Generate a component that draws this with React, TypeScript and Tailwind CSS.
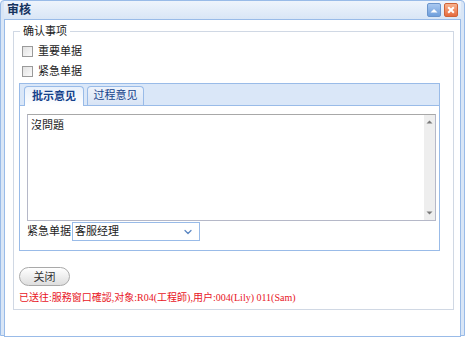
import { ChevronDown } from 'lucide-react';

const font = { fontFamily: '"Liberation Sans", "Noto Sans CJK SC", sans-serif' };

export default function App() {
  return (
    <div className="w-[465px] h-[337px] bg-white" style={font}>
      <div className="w-[465px] h-[336px] flex flex-col border border-[#99bbe8] bg-[#d9e6f6] rounded-t-[4px] px-[3px] pb-[5px]">
        {/* 标题栏 */}
        <div className="h-[21px] flex items-center justify-between pl-[3px] pr-[3px] bg-gradient-to-b from-[#eef4fc] to-[#d9e6f6]">
          <span className="text-[12px] font-bold text-[#15335e]">审核</span>
          <div className="flex gap-[3px]">
            <div className="w-[14px] h-[14px] rounded-[2px] bg-gradient-to-b from-[#a9c8f0] to-[#6f9fdc] border border-[#6b95cc] flex items-center justify-center">
              <svg width="8" height="5" viewBox="0 0 8 5"><path d="M0.5 4.5 L4 1 L7.5 4.5 Z" fill="#fff" /></svg>
            </div>
            <div className="w-[14px] h-[14px] rounded-[2px] bg-gradient-to-b from-[#f7b28e] to-[#e56a3d] border border-[#cf6236] flex items-center justify-center">
              <svg width="8" height="8" viewBox="0 0 8 8"><path d="M1.2 1.2 L6.8 6.8 M6.8 1.2 L1.2 6.8" stroke="#fff" strokeWidth="2" /></svg>
            </div>
          </div>
        </div>

        {/* 内容 */}
        <div className="flex-1 bg-white border border-[#99bbe8] pl-[8px] pr-[6px] pt-[3px] pb-[26px] flex flex-col">
          <fieldset className="flex-1 border border-[#d0d8e4] px-[5px] pb-[4px] flex flex-col">
            <legend className="text-[11px] text-[#222] px-[3px] ml-[1px]">确认事项</legend>

            <label className="flex items-center gap-[5px] mt-[4px] ml-[3px] h-[16px] text-[11px] text-[#222]">
              <span className="w-[11px] h-[11px] border border-[#9a9a9a] bg-gradient-to-br from-[#e2e2e2] to-[#fbfbfb]" />
              重要单据
            </label>
            <label className="flex items-center gap-[5px] mt-[4px] ml-[3px] h-[16px] text-[11px] text-[#222]">
              <span className="w-[11px] h-[11px] border border-[#9a9a9a] bg-gradient-to-br from-[#e2e2e2] to-[#fbfbfb]" />
              紧急单据
            </label>

            {/* 选项卡 */}
            <div className="mt-[3px] mr-[8px] h-[168px] border border-[#99bbe8] flex flex-col">
              <div className="h-[22px] bg-[#dae7f8] border-b border-[#99bbe8] flex items-end gap-[3px] pl-[4px]">
                <div className="h-[20px] w-[60px] -mb-px bg-gradient-to-b from-[#e8f0fb] to-white border border-b-0 border-[#99bbe8] rounded-t-[4px] flex items-center justify-center text-[11px] font-bold text-[#15428b]">
                  批示意见
                </div>
                <div className="h-[19px] w-[57px] bg-gradient-to-b from-[#eef3fb] to-[#d8e4f5] border border-b-0 border-[#99bbe8] rounded-t-[4px] flex items-center justify-center text-[11px] text-[#15428b]">
                  过程意见
                </div>
              </div>
              <div className="flex-1 flex flex-col pl-[7px] pr-[3px] pt-[8px]">
                <div className="h-[107px] border border-[#b5b8c8] border-t-[#a8a8a8] flex">
                  <div className="flex-1 text-[11px] text-[#222] pl-[3px] pt-[2px]">沒問題</div>
                  <div className="w-[11px] bg-[#eeeeee] flex flex-col items-center justify-between py-[5px]">
                    <svg width="7" height="4" viewBox="0 0 7 4"><path d="M0.5 3.5 L3.5 0.5 L6.5 3.5 Z" fill="#7a7a7a" /></svg>
                    <svg width="7" height="4" viewBox="0 0 7 4"><path d="M0.5 0.5 L3.5 3.5 L6.5 0.5 Z" fill="#7a7a7a" /></svg>
                  </div>
                </div>
                <div className="flex items-center mt-[1px] h-[20px] text-[11px] text-[#222]">
                  <span className="mr-[1px]">紧急单据</span>
                  <div className="w-[128px] h-[19px] border border-[#99bbe8] bg-white flex items-center justify-between pl-[2px] pr-[5px]">
                    <span>客服经理</span>
                    <ChevronDown className="w-[12px] h-[12px] text-[#5b86c2]" strokeWidth={2.5} />
                  </div>
                </div>
              </div>
            </div>

            <div className="mt-[13px]">
              <button className="w-[51px] h-[19px] rounded-full border border-[#a9a9a9] bg-gradient-to-b from-white to-[#dedede] text-[11px] text-[#333]">
                关闭
              </button>
            </div>
            <div className="mt-[2px] text-[10px] text-[#e8141e]" style={{ fontFamily: '"Liberation Serif", "Noto Sans CJK SC", serif' }}>
              已送往:服務窗口確認,对象:R04(工程師),用户:004(Lily) 011(Sam)
            </div>
          </fieldset>
        </div>
      </div>
    </div>
  );
}
